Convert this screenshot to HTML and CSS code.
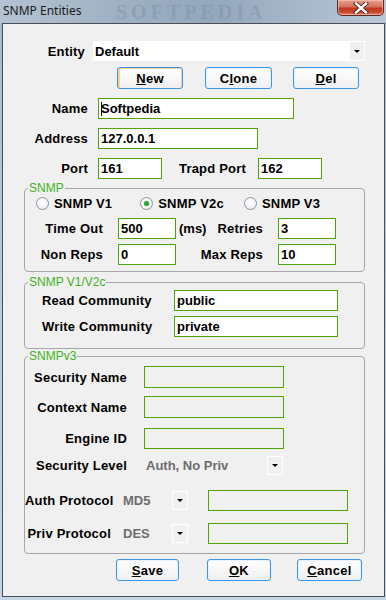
FILE: index.html
```html
<!DOCTYPE html>
<html lang="en">

<head>
  <meta charset="UTF-8">
  <meta name="viewport" content="width=device-width, initial-scale=1.0">
  <title>SNMP Entities</title>

  <link rel="stylesheet" href="styles.css">
</head>

<body>
  <div class="window">
    <div class="titlebar">
      <span class="title">SNMP Entities</span>
      <span class="watermark">SOFTPEDIA</span>
      <div class="close">
        <svg width="16" height="12" viewBox="0 0 16 12">
          <path d="M3 1.5 L13 10.5 M13 1.5 L3 10.5" stroke="#4b2420" stroke-width="4.2" stroke-linecap="square" />
          <path d="M3 1.5 L13 10.5 M13 1.5 L3 10.5" stroke="#fff" stroke-width="2.4" stroke-linecap="square" />
        </svg>
      </div>
    </div>

    <div class="client">
      <div class="row entity-row">
        <label class="lbl lbl-entity">Entity</label>
        <div class="combo">
          <span>Default</span>
          <span class="combo-btn"><i class="arrow"></i></span>
        </div>
      </div>

      <div class="row btn-row top-btns">
        <button class="btn focus"><u>N</u>ew</button>
        <button class="btn">C<u>l</u>one</button>
        <button class="btn"><u>D</u>el</button>
      </div>

      <div class="row field-row">
        <label class="lbl lbl-main">Name</label>
        <div class="input w-name"><span class="caret"></span>Softpedia</div>
      </div>

      <div class="row field-row">
        <label class="lbl lbl-main">Address</label>
        <div class="input w-addr">127.0.0.1</div>
      </div>

      <div class="row field-row">
        <label class="lbl lbl-main">Port</label>
        <div class="input w-port">161</div>
        <label class="lbl lbl-trapd">Trapd Port</label>
        <div class="input w-port">162</div>
      </div>

      <div class="group g-snmp">
        <span class="legend">SNMP</span>
        <div class="radio-row">
          <div class="radio r1"><i class="dot"></i>SNMP V1</div>
          <div class="radio r2"><i class="dot on"></i>SNMP V2c</div>
          <div class="radio r3"><i class="dot"></i>SNMP V3</div>
        </div>
        <div class="row snmp-row first">
          <label class="lbl lbl-snmp">Time Out</label>
          <div class="input w-small">500</div>
          <div class="mid">
            <span class="ms">(ms)</span>
            <label class="lbl">Retries</label>
          </div>
          <div class="input w-small">3</div>
        </div>
        <div class="row snmp-row">
          <label class="lbl lbl-snmp">Non Reps</label>
          <div class="input w-small">0</div>
          <div class="mid">
            <label class="lbl">Max Reps</label>
          </div>
          <div class="input w-small">10</div>
        </div>
      </div>

      <div class="group g-comm">
        <span class="legend">SNMP V1/V2c</span>
        <div class="row comm-row first">
          <label class="lbl lbl-comm">Read Community</label>
          <div class="input w-comm">public</div>
        </div>
        <div class="row comm-row">
          <label class="lbl lbl-comm">Write Community</label>
          <div class="input w-comm">private</div>
        </div>
      </div>

      <div class="group g-v3">
        <span class="legend">SNMPv3</span>
        <div class="row v3-row r-sec">
          <label class="lbl lbl-v3">Security Name</label>
          <div class="input w-v3"></div>
        </div>
        <div class="row v3-row r-ctx">
          <label class="lbl lbl-v3">Context Name</label>
          <div class="input w-v3"></div>
        </div>
        <div class="row v3-row r-eng">
          <label class="lbl lbl-v3">Engine ID</label>
          <div class="input w-v3 h21"></div>
        </div>
        <div class="row v3-row r-lvl">
          <label class="lbl lbl-v3">Security Level</label>
          <span class="value v-lvl">Auth, No Priv</span>
          <span class="drop"><i class="arrow"></i></span>
        </div>
        <div class="row v3-row r-auth">
          <label class="lbl lbl-proto">Auth Protocol</label>
          <span class="value v-proto">MD5</span>
          <span class="drop"><i class="arrow"></i></span>
          <div class="input w-v3 h21 pass"></div>
        </div>
        <div class="row v3-row r-priv">
          <label class="lbl lbl-proto">Priv Protocol</label>
          <span class="value v-proto">DES</span>
          <span class="drop"><i class="arrow"></i></span>
          <div class="input w-v3 h21 pass"></div>
        </div>
      </div>

      <div class="row btn-row bottom-btns">
        <button class="btn b-save"><u>S</u>ave</button>
        <button class="btn b-ok"><u>O</u>K</button>
        <button class="btn b-cancel"><u>C</u>ancel</button>
      </div>
    </div>
  </div>
</body>

</html>
```

FILE: styles.css
```css
* {
  margin: 0;
  padding: 0;
  box-sizing: border-box;
}

body {
  background: #b9cbdc;
  font-family: "Liberation Sans", Arial, sans-serif;
}

.window {
  width: 386px;
  height: 600px;
  background: linear-gradient(180deg, #a7b7c8 0%, #b7c8d9 40%, #c5d5e4 100%);
  overflow: hidden;
}

/* title bar */
.titlebar {
  position: relative;
  height: 23px;
  display: flex;
  align-items: flex-start;
  background: linear-gradient(90deg, #b4c3d2 0%, #9fb1c3 30%, #94a7bb 55%, #a8b9ca 80%, #b9c8d6 100%);
}

.title {
  font-family: "Noto Sans", "DejaVu Sans", sans-serif;
  font-size: 12px;
  color: #1b1b1b;
  padding: 2px 0 0 3px;
  line-height: 17px;
}

.watermark {
  position: absolute;
  left: 116px;
  top: 1px;
  font-family: "Liberation Serif", serif;
  font-weight: bold;
  font-size: 20px;
  line-height: 22px;
  letter-spacing: 4px;
  color: #8195ab;
  opacity: 0.55;
}

.close {
  margin-left: auto;
  margin-right: 2px;
  width: 47px;
  height: 16px;
  border: 1px solid #5a2a26;
  border-top: none;
  border-radius: 0 0 5px 5px;
  background: linear-gradient(180deg, #e6a18f 0%, #d6705b 45%, #c0381f 55%, #c8482c 80%, #e0866a 100%);
  box-shadow: inset 0 0 0 1px rgba(255, 210, 200, 0.5);
  display: flex;
  justify-content: center;
  align-items: center;
}

/* client area */
.client {
  margin: 0 1px 0 2px;
  height: 574px;
  background: #f0f0f0;
  border: 1px solid #4b4f55;
  font-size: 13px;
  font-weight: bold;
  color: #000;
}

.row {
  display: flex;
  align-items: center;
}

.lbl {
  white-space: nowrap;
  letter-spacing: 0.2px;
}

.entity-row {
  margin-top: 17px;
  height: 20px;
}

.lbl-entity {
  width: 82px;
  text-align: right;
  margin-right: 8px;
}

.combo {
  width: 272px;
  height: 20px;
  background: #fff;
  display: flex;
  align-items: center;
  padding-left: 2px;
}

.combo-btn {
  margin-left: auto;
  width: 16px;
  height: 20px;
  background: #f0f0f0;
  border: 1px solid #fff;
  display: flex;
  justify-content: center;
  align-items: center;
}

.arrow {
  width: 0;
  height: 0;
  border-left: 3px solid transparent;
  border-right: 3px solid transparent;
  border-top: 3px solid #000;
}

/* buttons */
.btn-row {
  height: 22px;
}

.top-btns {
  margin-top: 6px;
  padding-left: 114px;
  gap: 22px;
}

.btn {
  width: 66px;
  height: 22px;
  background: linear-gradient(180deg, #ffffff 0%, #f6f6f6 60%, #eeeeee 100%);
  border: 1px solid #3d95e6;
  border-radius: 3px;
  font-family: "Liberation Sans", Arial, sans-serif;
  font-weight: bold;
  font-size: 13px;
  letter-spacing: 0.3px;
  color: #000;
  box-shadow: inset 0 0 0 1px #e6f2fd;
}

.btn.focus {
  box-shadow: inset 2px 1px 0 #f7cf9a, inset -1px 0 0 #f7cf9a;
}

.top-btns .btn:nth-child(2) {
  width: 67px;
}

.top-btns .btn:nth-child(3) {
  margin-left: -1px;
}

.bottom-btns {
  margin-top: 5px;
  padding-left: 113px;
}

.b-save {
  width: 63px;
}

.b-ok {
  width: 64px;
  margin-left: 28px;
}

.b-cancel {
  width: 65px;
  margin-left: 26px;
}

/* inputs */
.input {
  height: 21px;
  background: #fff;
  border: 1px solid #4fa30c;
  padding-left: 2px;
  display: flex;
  align-items: center;
  white-space: nowrap;
}

.caret {
  width: 1px;
  height: 14px;
  background: #000;
  margin-right: -1px;
}

.field-row {
  margin-top: 9px;
  height: 21px;
}

.lbl-main {
  width: 85px;
  text-align: right;
  margin-right: 10px;
}

.w-name {
  width: 196px;
}

.w-addr {
  width: 160px;
}

.w-port {
  width: 64px;
}

.lbl-trapd {
  margin-left: 17px;
  width: 67px;
  margin-right: 12px;
}

/* group boxes */
.group {
  position: relative;
  margin-left: 21px;
  width: 341px;
  border: 1px solid #a6a6a6;
  border-radius: 4px;
}

.legend {
  position: absolute;
  left: 3px;
  top: -8px;
  padding: 0 1px;
  background: #f0f0f0;
  color: #43b21c;
  font-weight: normal;
  font-size: 12px;
  line-height: 14px;
}

.g-snmp {
  margin-top: 9px;
  height: 84px;
}

.radio-row {
  margin-top: 7px;
  height: 14px;
  display: flex;
  align-items: center;
}

.radio {
  display: flex;
  align-items: center;
  white-space: nowrap;
  letter-spacing: 0.2px;
}

.dot {
  width: 13px;
  height: 13px;
  border-radius: 50%;
  border: 1px solid #8597ab;
  background: radial-gradient(circle at 50% 40%, #ffffff 0%, #f4f4f4 60%, #dcdcdc 100%);
  margin-right: 5px;
  display: flex;
  justify-content: center;
  align-items: center;
}

.dot.on::after {
  content: "";
  width: 5px;
  height: 5px;
  border-radius: 50%;
  background: #2ca534;
  box-shadow: 0 0 1px #8be07a;
}

.r1 {
  margin-left: 11px;
}

.r2 {
  margin-left: 28px;
}

.r3 {
  margin-left: 20px;
}

.snmp-row {
  height: 21px;
  margin-top: 5px;
}

.snmp-row.first {
  margin-top: 8px;
}

.lbl-snmp {
  width: 78px;
  text-align: right;
  margin-right: 15px;
}

.w-small {
  width: 58px;
}

.mid {
  width: 88px;
  margin-right: 14px;
  display: flex;
  align-items: center;
  justify-content: flex-end;
  padding-right: 1px;
}

.ms {
  margin-right: auto;
  margin-left: 3px;
}

.g-comm {
  margin-top: 10px;
  height: 67px;
}

.comm-row {
  height: 21px;
  margin-top: 5px;
  padding-left: 17px;
}

.comm-row.first {
  margin-top: 7px;
}

.lbl-comm {
  width: 132px;
}

.w-comm {
  width: 164px;
}

.g-v3 {
  margin-top: 7px;
  height: 198px;
}

.v3-row {
  height: 22px;
}

.r-sec {
  margin-top: 9px;
}

.r-ctx {
  margin-top: 8px;
}

.r-eng {
  margin-top: 10px;
  height: 21px;
}

.r-lvl {
  margin-top: 7px;
  height: 19px;
}

.r-auth {
  margin-top: 14px;
}

.r-priv {
  margin-top: 12px;
  height: 21px;
}

.lbl-v3 {
  width: 102px;
  text-align: right;
  margin-right: 17px;
}

.w-v3 {
  width: 140px;
  height: 22px;
  background: #f0f0f0;
}

.w-v3.h21 {
  height: 21px;
}

.value {
  color: #6d6d6d;
  white-space: nowrap;
}

.v-lvl {
  width: 123px;
  padding-left: 2px;
}

.drop {
  width: 16px;
  height: 19px;
  border: 1px solid #fff;
  background: #f0f0f0;
  display: flex;
  justify-content: center;
  align-items: center;
}

.lbl-proto {
  width: 86px;
  text-align: right;
  margin-right: 12px;
}

.v-proto {
  width: 49px;
}

.pass {
  margin-left: 20px;
}
```
